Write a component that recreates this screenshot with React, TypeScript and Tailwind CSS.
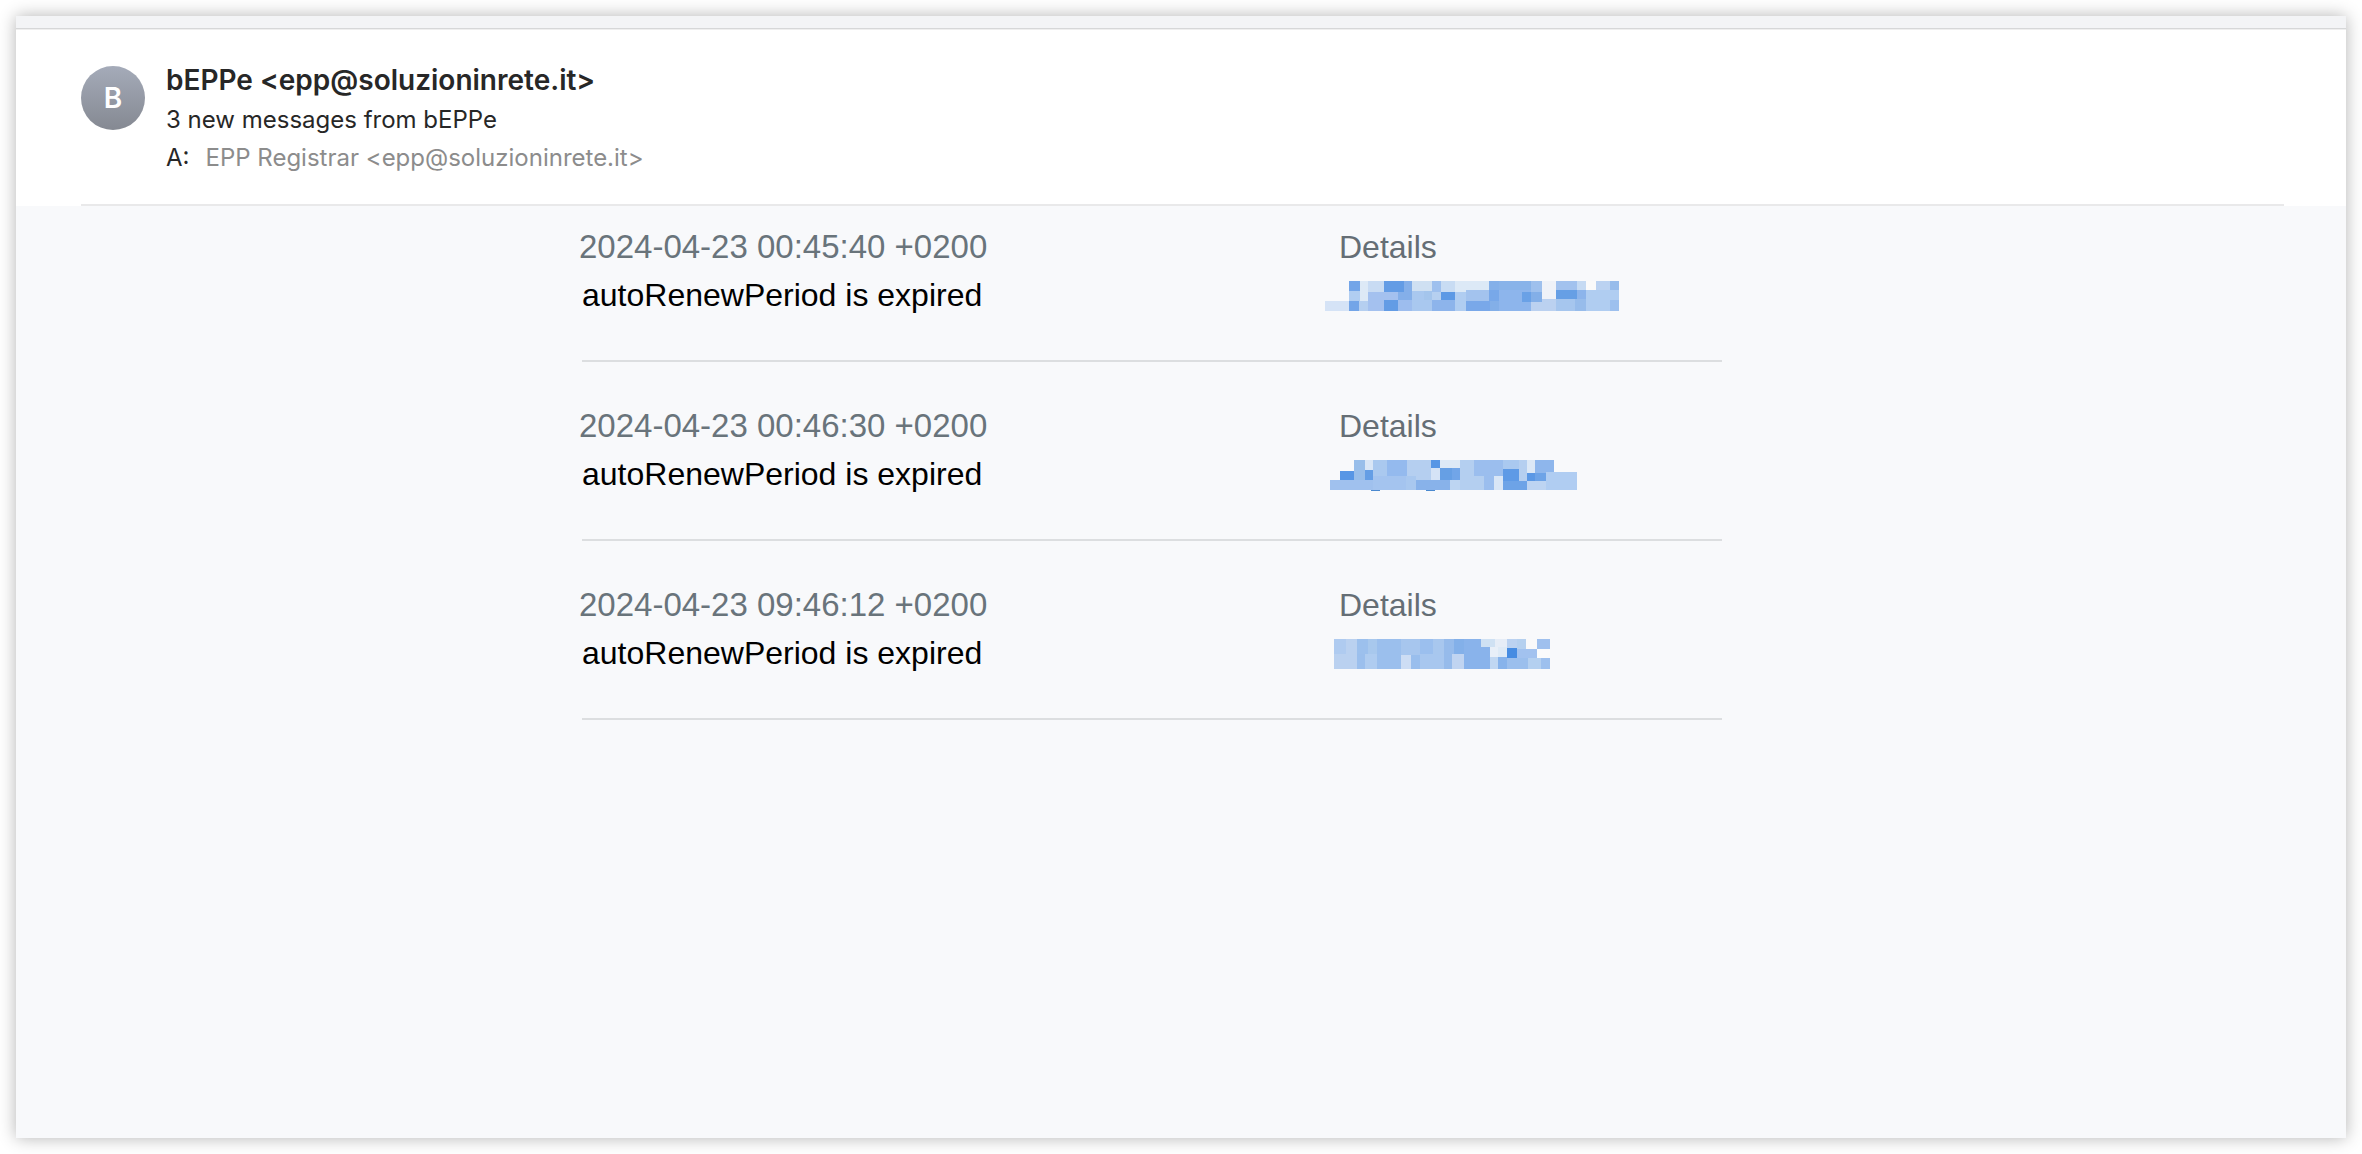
import type { ReactNode } from "react";

type Block = [x: number, y: number, w: number, h: number, fill: string];

type Message = {
  id: number;
  date: string;
  text: string;
  blocks: Block[];
};

const messages: Message[] = [
  {
    id: 1,
    date: "2024-04-23 00:45:40 +0200",
    text: "autoRenewPeriod is expired",
    blocks: [
      [0, 63, 72, 30, "#d5e3f6"],
      [72, 3, 33, 30, "#73a5e8"],
      [72, 33, 33, 30, "#b0cdf1"],
      [72, 63, 30, 30, "#73a5e8"],
      [105, 3, 24, 60, "#dde9f6"],
      [102, 63, 27, 30, "#b5cff0"],
      [129, 3, 48, 33, "#c8dbf3"],
      [129, 36, 90, 57, "#a4c1ef"],
      [177, 3, 60, 33, "#639ce5"],
      [177, 60, 42, 33, "#639ce5"],
      [237, 3, 24, 33, "#84afe9"],
      [219, 36, 42, 24, "#84afe9"],
      [219, 60, 42, 33, "#9dbdee"],
      [261, 3, 60, 30, "#cfe0f2"],
      [261, 33, 60, 60, "#a9c8ef"],
      [297, 33, 24, 27, "#a4c5ec"],
      [321, 3, 27, 33, "#9ec0ee"],
      [348, 3, 42, 33, "#c8dcf3"],
      [321, 36, 27, 24, "#b6d0f0"],
      [348, 36, 42, 24, "#5c99e5"],
      [321, 60, 69, 33, "#8db4eb"],
      [390, 3, 102, 33, "#dce9f6"],
      [390, 36, 33, 57, "#b0cdf1"],
      [423, 30, 69, 33, "#a3c3ee"],
      [423, 63, 72, 30, "#79a8e9"],
      [492, 3, 30, 27, "#84b0e9"],
      [492, 30, 30, 33, "#78a8e9"],
      [495, 63, 27, 30, "#83afe8"],
      [522, 3, 96, 90, "#8db5ec"],
      [522, 3, 96, 27, "#88b3e9"],
      [591, 36, 27, 30, "#6aa1e6"],
      [618, 3, 33, 33, "#9ec0ed"],
      [618, 57, 75, 36, "#bbd1f0"],
      [618, 36, 33, 30, "#83afe8"],
      [651, 3, 42, 54, "#eff2f8"],
      [693, 3, 63, 27, "#a2c2ee"],
      [693, 30, 63, 27, "#669fe5"],
      [693, 57, 57, 36, "#a6c6ee"],
      [756, 3, 27, 27, "#c5daf3"],
      [756, 30, 27, 27, "#8cb4eb"],
      [750, 57, 33, 36, "#97bceb"],
      [783, 3, 30, 27, "#fafafa"],
      [813, 3, 42, 27, "#bbd2f1"],
      [855, 3, 27, 27, "#97bceb"],
      [783, 30, 99, 63, "#b0cdf1"],
      [855, 60, 27, 33, "#9dc0ee"],
    ],
  },
  {
    id: 2,
    date: "2024-04-23 00:46:30 +0200",
    text: "autoRenewPeriod is expired",
    blocks: [
      [45, 36, 42, 27, "#5796e5"],
      [15, 63, 129, 30, "#a0c1ee"],
      [87, 3, 33, 60, "#98beea"],
      [120, 3, 24, 30, "#d9e6f6"],
      [120, 33, 24, 30, "#649ee5"],
      [144, 3, 42, 48, "#aac9ef"],
      [144, 51, 99, 42, "#a4c4ef"],
      [186, 3, 60, 48, "#94baee"],
      [246, 3, 72, 48, "#b5cff0"],
      [243, 51, 30, 42, "#a9c8ef"],
      [273, 51, 45, 12, "#b5cff0"],
      [273, 63, 102, 30, "#88b2ea"],
      [318, 3, 27, 24, "#5796e5"],
      [318, 27, 27, 36, "#d5e3f6"],
      [345, 3, 60, 24, "#dde9f6"],
      [345, 27, 36, 36, "#669fe4"],
      [381, 27, 24, 36, "#71a5e8"],
      [375, 63, 30, 30, "#bdd5f2"],
      [405, 3, 72, 90, "#b4cff0"],
      [447, 3, 87, 48, "#9bbeee"],
      [477, 51, 30, 42, "#9bbeee"],
      [507, 51, 27, 42, "#d9e6f6"],
      [534, 3, 48, 27, "#aac9f0"],
      [534, 30, 48, 36, "#5e9ae6"],
      [534, 66, 72, 27, "#6da3e7"],
      [582, 3, 24, 63, "#b5cff0"],
      [606, 3, 24, 39, "#dce8f6"],
      [606, 42, 24, 24, "#5b98e5"],
      [630, 3, 57, 39, "#8eb6ec"],
      [630, 42, 33, 24, "#6da3e7"],
      [606, 66, 57, 27, "#bdd4f2"],
      [663, 39, 93, 54, "#b0cdf2"],
      [138, 93, 28, 3, "#4a89cf"],
      [303, 93, 28, 3, "#4a89cf"],
    ],
  },
  {
    id: 3,
    date: "2024-04-23 09:46:12 +0200",
    text: "autoRenewPeriod is expired",
    blocks: [
      [27, 3, 36, 45, "#afcbf0"],
      [27, 48, 69, 45, "#bad1f0"],
      [63, 3, 33, 45, "#bad1f0"],
      [96, 3, 33, 45, "#9cc0ed"],
      [129, 3, 27, 45, "#a8c8ed"],
      [96, 48, 24, 45, "#9bbfed"],
      [120, 48, 36, 45, "#afccf0"],
      [156, 3, 72, 90, "#9bbfed"],
      [228, 3, 57, 48, "#a7c6ee"],
      [285, 48, 72, 45, "#a8c7ef"],
      [285, 3, 39, 45, "#9bbfee"],
      [324, 3, 33, 48, "#a8c7ee"],
      [228, 51, 30, 42, "#cdddf4"],
      [258, 51, 27, 42, "#99beed"],
      [357, 3, 30, 90, "#96bbeb"],
      [381, 48, 36, 45, "#c0d4f1"],
      [387, 3, 30, 45, "#83b0e9"],
      [417, 3, 78, 90, "#89b3eb"],
      [468, 3, 42, 24, "#cfe1f3"],
      [510, 3, 36, 24, "#e6edf7"],
      [495, 27, 24, 30, "#e8eff8"],
      [519, 27, 27, 30, "#deeaf6"],
      [495, 57, 24, 36, "#c0d7f2"],
      [519, 57, 27, 36, "#87b3eb"],
      [546, 3, 30, 27, "#bbd2f1"],
      [576, 3, 27, 30, "#b5d0ef"],
      [603, 3, 33, 30, "#f9f9fa"],
      [636, 3, 39, 30, "#9fc0ee"],
      [546, 30, 30, 30, "#468ce2"],
      [576, 33, 60, 27, "#a2c2ef"],
      [636, 33, 39, 27, "#fafbfc"],
      [546, 60, 63, 33, "#9bbfed"],
      [609, 60, 39, 33, "#b4d0f0"],
      [648, 60, 27, 33, "#9dc0ee"],
    ],
  },
];

function HeaderLine({ children }: { children: ReactNode }) {
  return <p className="text-[24px] leading-[38px] text-[#272727]">{children}</p>;
}

// Pixelated domain name
function MaskedLink({ blocks }: { blocks: Block[] }) {
  return (
    <svg
      viewBox="0 0 900 96"
      className="mt-2.5 -ml-[15px] block h-8 w-[300px]"
      shapeRendering="crispEdges"
      aria-hidden="true"
    >
      {blocks.map(([x, y, w, h, fill], i) => (
        <rect key={i} x={x} y={y} width={w} height={h} fill={fill} />
      ))}
    </svg>
  );
}

function MessageRow({ message }: { message: Message }) {
  return (
    <li className="flex border-b-2 border-[#dcdee0] pt-[41px] pb-10 first:pt-[18px]">
      <div className="flex-1">
        <p className="-ml-[3px] text-[33px] leading-[46px] text-[#69747b]">
          {message.date}
        </p>
        <p className="text-[32px] leading-[50px] text-black">{message.text}</p>
      </div>
      <div className="w-[382px]">
        <p className="-ml-px text-[32px] leading-[46px] text-[#656e75]">Details</p>
        <MaskedLink blocks={message.blocks} />
      </div>
    </li>
  );
}

export default function App() {
  return (
    <div className="min-h-screen bg-white p-4 font-['Liberation_Sans',Arial,sans-serif]">
      <div className="flex min-h-[calc(100vh-32px)] flex-col bg-[#f8f9fb] shadow-[0_0_16px_rgba(0,0,0,0.3)]">
        <div className="h-[13px] border-b border-[#d6d7d8] bg-[#f3f4f6]" />
        <header className="border-t border-[#efefef] bg-white pt-8 pr-[62px] pl-[65px] font-[Inter,sans-serif]">
          <div className="flex gap-[21px] pb-[27px]">
            <div className="mt-1 flex size-16 shrink-0 items-center justify-center rounded-full bg-linear-to-b from-[#a5abb9] to-[#858992] text-[28px] font-semibold text-white">
              B
            </div>
            <div>
              <h1 className="pb-[3px] text-[28px] leading-9 font-semibold text-[#272727]">
                bEPPe &lt;epp@soluzioninrete.it&gt;
              </h1>
              <HeaderLine>3 new messages from bEPPe</HeaderLine>
              <HeaderLine>
                A:
                <span className="ml-4 text-[#8c8c8c]">
                  EPP Registrar &lt;epp@soluzioninrete.it&gt;
                </span>
              </HeaderLine>
            </div>
          </div>
          <hr className="border-t-2 border-[#e9e9ea]" />
        </header>
        <main className="flex justify-center pr-[58px]">
          <ul className="w-full max-w-[1140px]">
            {messages.map((message) => (
              <MessageRow key={message.id} message={message} />
            ))}
          </ul>
        </main>
      </div>
    </div>
  );
}
